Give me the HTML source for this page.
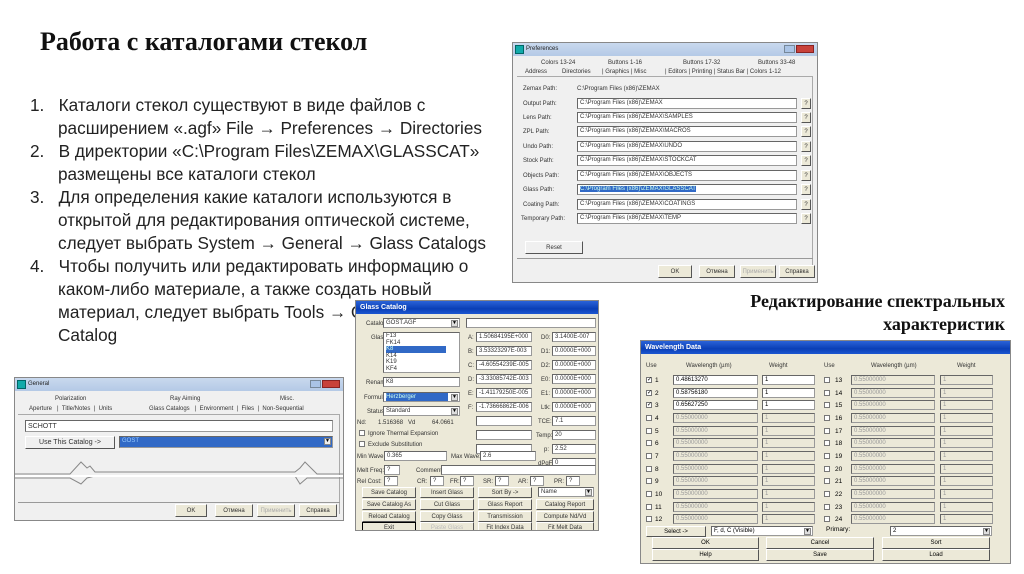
<!DOCTYPE html>
<html><head><meta charset="utf-8"><style>
*{margin:0;padding:0;box-sizing:border-box}
body{width:1024px;height:574px;background:#fff;position:relative;overflow:hidden;font-family:"Liberation Sans",sans-serif}
.a{position:absolute}
.t{position:absolute;left:0;font-family:"Liberation Sans","DejaVu Sans",sans-serif;font-size:17.2px;color:#222;white-space:nowrap;line-height:23px}
.w{position:absolute;background:#ece9d8;border:1px solid #888;font-size:6px;color:#333;overflow:hidden;line-height:1}
.w .a{white-space:nowrap}
.f{position:absolute;background:#fff;border:1px solid #999;border-top-color:#666;border-left-color:#666;font-size:6px;padding-left:2px;line-height:9px;white-space:nowrap;overflow:hidden}
.g{background:#ece9d8;color:#999}
.b{position:absolute;background:#ece9d8;border:1px solid #fff;border-right-color:#555;border-bottom-color:#555;font-size:6px;text-align:center;line-height:10px;white-space:nowrap}
.sel{background:#3169c6;color:#cfe}
.cb{position:absolute;width:6px;height:6px;background:#fff;border:1px solid #777;font-size:6px;line-height:5px;text-align:center}
.dd{position:absolute;right:1px;top:1px;width:7px;height:7px;background:#ddd;border:1px solid #888;font-size:5px;line-height:5px;text-align:center;color:#000}
.xp{position:absolute;left:0;top:0;right:0;height:13px;background:linear-gradient(#2a63d8,#0a3fb6 60%,#1c56d0);color:#fff;font-weight:bold;font-size:7px;line-height:13px;padding-left:4px}
.w7{position:absolute;left:0;top:0;right:0;height:13px;background:linear-gradient(#c9d9ee,#b4c9e6);color:#222;font-size:6px;line-height:13px;padding-left:13px}
</style></head><body>

<div class="a" style="left:40px;top:27px;font-family:'Liberation Serif',serif;font-weight:bold;font-size:26px;color:#111;white-space:nowrap">Работа с каталогами стекол</div>

<div class="a" style="left:30px;top:94px;width:470px;height:260px">
<div class="t" style="top:0">1.&nbsp;&nbsp;&nbsp;Каталоги стекол существуют в виде файлов с</div>
<div class="t" style="top:23px;left:28px">расширением «.agf» File → Preferences → Directories</div>
<div class="t" style="top:46px">2.&nbsp;&nbsp;&nbsp;В директории «C:\Program Files\ZEMAX\GLASSCAT»</div>
<div class="t" style="top:69px;left:28px">размещены все каталоги стекол</div>
<div class="t" style="top:92px">3.&nbsp;&nbsp;&nbsp;Для определения какие каталоги используются в</div>
<div class="t" style="top:115px;left:28px">открытой для редактирования оптической системе,</div>
<div class="t" style="top:138px;left:28px">следует выбрать System → General → Glass Catalogs</div>
<div class="t" style="top:161px">4.&nbsp;&nbsp;&nbsp;Чтобы получить или редактировать информацию о</div>
<div class="t" style="top:184px;left:28px">каком-либо материале, а также создать новый</div>
<div class="t" style="top:207px;left:28px">материал, следует выбрать Tools → Glass</div>
<div class="t" style="top:230px;left:28px">Catalog</div>
</div>

<div class="a" style="right:19px;top:290px;text-align:right;font-family:'Liberation Serif',serif;font-weight:bold;font-size:18px;line-height:23px;color:#111;white-space:nowrap">Редактирование спектральных<br>характеристик</div>

<!-- Preferences -->
<div class="w" style="left:512px;top:42px;width:306px;height:241px;background:#f0f0f0">
<div class="w7">Preferences</div>
<div class="a" style="left:2px;top:2px;width:9px;height:9px;background:#1aa;border:1px solid #066"></div>
<div class="a" style="right:22px;top:2px;width:11px;height:8px;background:#aac4e6;border:1px solid #789"></div>
<div class="a" style="right:3px;top:2px;width:18px;height:8px;background:#c8413a;border:1px solid #822"></div>
<div class="a" style="left:28px;top:17px">Colors 13-24</div><div class="a" style="left:95px;top:17px">Buttons 1-16</div><div class="a" style="left:170px;top:17px">Buttons 17-32</div><div class="a" style="left:245px;top:17px">Buttons 33-48</div>
<div class="a" style="left:12px;top:26px">Address</div><div class="a" style="left:49px;top:26px">Directories</div><div class="a" style="left:89px;top:26px">| Graphics | Misc</div><div class="a" style="left:152px;top:26px">| Editors | Printing | Status Bar | Colors 1-12</div>
<div class="a" style="left:4px;top:33px;width:296px;height:202px;border-top:1px solid #aaa;border-right:1px solid #aaa"></div>
<div class="a" style="left:10px;top:43px">Zemax Path:</div><div class="a" style="left:64px;top:43px">C:\Program Files (x86)\ZEMAX</div>
<div class="a" style="left:10px;top:58px">Output Path:</div><div class="f" style="left:64px;top:55px;width:220px;height:11px">C:\Program Files (x86)\ZEMAX</div><div class="b" style="left:288px;top:55px;width:10px;height:11px">?</div>
<div class="a" style="left:10px;top:72px">Lens Path:</div><div class="f" style="left:64px;top:69px;width:220px;height:11px">C:\Program Files (x86)\ZEMAX\SAMPLES</div><div class="b" style="left:288px;top:69px;width:10px;height:11px">?</div>
<div class="a" style="left:10px;top:86px">ZPL Path:</div><div class="f" style="left:64px;top:83px;width:220px;height:11px">C:\Program Files (x86)\ZEMAX\MACROS</div><div class="b" style="left:288px;top:83px;width:10px;height:11px">?</div>
<div class="a" style="left:10px;top:101px">Undo Path:</div><div class="f" style="left:64px;top:98px;width:220px;height:11px">C:\Program Files (x86)\ZEMAX\UNDO</div><div class="b" style="left:288px;top:98px;width:10px;height:11px">?</div>
<div class="a" style="left:10px;top:115px">Stock Path:</div><div class="f" style="left:64px;top:112px;width:220px;height:11px">C:\Program Files (x86)\ZEMAX\STOCKCAT</div><div class="b" style="left:288px;top:112px;width:10px;height:11px">?</div>
<div class="a" style="left:10px;top:130px">Objects Path:</div><div class="f" style="left:64px;top:127px;width:220px;height:11px">C:\Program Files (x86)\ZEMAX\OBJECTS</div><div class="b" style="left:288px;top:127px;width:10px;height:11px">?</div>
<div class="a" style="left:10px;top:144px">Glass Path:</div><div class="f" style="left:64px;top:141px;width:220px;height:11px"><span class="sel">C:\Program Files (x86)\ZEMAX\GLASSCAT</span></div><div class="b" style="left:288px;top:141px;width:10px;height:11px">?</div>
<div class="a" style="left:10px;top:159px">Coating Path:</div><div class="f" style="left:64px;top:156px;width:220px;height:11px">C:\Program Files (x86)\ZEMAX\COATINGS</div><div class="b" style="left:288px;top:156px;width:10px;height:11px">?</div>
<div class="a" style="left:8px;top:173px">Temporary Path:</div><div class="f" style="left:64px;top:170px;width:220px;height:11px">C:\Program Files (x86)\ZEMAX\TEMP</div><div class="b" style="left:288px;top:170px;width:10px;height:11px">?</div>
<div class="b" style="left:12px;top:198px;width:58px;height:13px;line-height:12px;background:#f0f0f0">Reset</div>
<div class="a" style="left:4px;top:215px;width:296px;border-top:1px solid #999"></div>
<div class="b" style="left:145px;top:222px;width:34px;height:13px;line-height:12px">OK</div>
<div class="b" style="left:186px;top:222px;width:36px;height:13px;line-height:12px">Отмена</div>
<div class="b" style="left:227px;top:222px;width:36px;height:13px;line-height:12px;color:#aaa">Применить</div>
<div class="b" style="left:266px;top:222px;width:36px;height:13px;line-height:12px">Справка</div>
</div>

<!-- Glass Catalog -->
<div class="w" style="left:355px;top:300px;width:244px;height:231px">
<div class="xp">Glass Catalog</div>
<div class="a" style="left:10px;top:20px">Catalog:</div><div class="f" style="left:27px;top:17px;width:77px;height:10px">GOST.AGF<div class="dd">▼</div></div>
<div class="f" style="left:110px;top:17px;width:130px;height:10px"></div>
<div class="a" style="left:15px;top:34px">Glass:</div>
<div class="f" style="left:27px;top:31px;width:77px;height:41px;line-height:6.5px">F13<br>FK14<br><span class="sel" style="display:inline-block;width:60px">K8</span><br>K14<br>K19<br>KF4</div>
<div class="a" style="left:10px;top:79px">Rename:</div><div class="f" style="left:27px;top:76px;width:77px;height:10px">K8</div>
<div class="a" style="left:8px;top:94px">Formula:</div><div class="f" style="left:27px;top:91px;width:77px;height:10px"><span class="sel" style="display:inline-block;width:62px">Herzberger</span><div class="dd">▼</div></div>
<div class="a" style="left:11px;top:108px">Status:</div><div class="f" style="left:27px;top:105px;width:77px;height:10px">Standard<div class="dd">▼</div></div>
<div class="a" style="left:1px;top:119px">Nd:&nbsp;&nbsp;&nbsp;&nbsp;&nbsp;&nbsp;&nbsp;1.516368&nbsp;&nbsp;&nbsp;Vd&nbsp;&nbsp;&nbsp;&nbsp;&nbsp;&nbsp;&nbsp;&nbsp;&nbsp;&nbsp;64.0661</div>
<div class="cb" style="left:3px;top:129px"></div><div class="a" style="left:12px;top:130px">Ignore Thermal Expansion</div>
<div class="cb" style="left:3px;top:140px"></div><div class="a" style="left:12px;top:141px">Exclude Substitution</div>
<div class="a" style="left:112px;top:34px">A:</div><div class="f" style="left:120px;top:31px;width:56px;height:10px">1.50684195E+000</div>
<div class="a" style="left:112px;top:48px">B:</div><div class="f" style="left:120px;top:45px;width:56px;height:10px">3.53323297E-003</div>
<div class="a" style="left:112px;top:62px">C:</div><div class="f" style="left:120px;top:59px;width:56px;height:10px">-4.60554239E-005</div>
<div class="a" style="left:112px;top:76px">D:</div><div class="f" style="left:120px;top:73px;width:56px;height:10px">-3.33085742E-003</div>
<div class="a" style="left:112px;top:90px">E:</div><div class="f" style="left:120px;top:87px;width:56px;height:10px">-1.41179250E-005</div>
<div class="a" style="left:112px;top:104px">F:</div><div class="f" style="left:120px;top:101px;width:56px;height:10px">-1.73666862E-006</div>
<div class="f" style="left:120px;top:115px;width:56px;height:10px"></div>
<div class="f" style="left:120px;top:129px;width:56px;height:10px"></div>
<div class="f" style="left:120px;top:143px;width:56px;height:10px"></div>
<div class="a" style="left:185px;top:34px">D0:</div><div class="f" style="left:196px;top:31px;width:44px;height:10px">3.1400E-007</div>
<div class="a" style="left:185px;top:48px">D1:</div><div class="f" style="left:196px;top:45px;width:44px;height:10px">0.0000E+000</div>
<div class="a" style="left:185px;top:62px">D2:</div><div class="f" style="left:196px;top:59px;width:44px;height:10px">0.0000E+000</div>
<div class="a" style="left:185px;top:76px">E0:</div><div class="f" style="left:196px;top:73px;width:44px;height:10px">0.0000E+000</div>
<div class="a" style="left:185px;top:90px">E1:</div><div class="f" style="left:196px;top:87px;width:44px;height:10px">0.0000E+000</div>
<div class="a" style="left:185px;top:104px">Ltk:</div><div class="f" style="left:196px;top:101px;width:44px;height:10px">0.0000E+000</div>
<div class="a" style="left:182px;top:118px">TCE:</div><div class="f" style="left:196px;top:115px;width:44px;height:10px">7.1</div>
<div class="a" style="left:180px;top:132px">Temp:</div><div class="f" style="left:196px;top:129px;width:44px;height:10px">20</div>
<div class="a" style="left:188px;top:146px">p:</div><div class="f" style="left:196px;top:143px;width:44px;height:10px">2.52</div>
<div class="a" style="left:182px;top:160px">dPgF:</div><div class="f" style="left:196px;top:157px;width:44px;height:10px">0</div>
<div class="a" style="left:1px;top:153px">Min Wave:</div><div class="f" style="left:28px;top:150px;width:63px;height:10px">0.365</div>
<div class="a" style="left:95px;top:153px">Max Wave:</div><div class="f" style="left:124px;top:150px;width:56px;height:10px">2.6</div>
<div class="a" style="left:1px;top:167px">Melt Freq:</div><div class="f" style="left:28px;top:164px;width:16px;height:10px">?</div>
<div class="a" style="left:60px;top:167px">Comment:</div><div class="f" style="left:85px;top:164px;width:155px;height:10px"></div>
<div class="a" style="left:1px;top:178px">Rel Cost:</div><div class="f" style="left:28px;top:175px;width:14px;height:10px">?</div>
<div class="a" style="left:61px;top:178px">CR:</div><div class="f" style="left:74px;top:175px;width:14px;height:10px">?</div>
<div class="a" style="left:94px;top:178px">FR:</div><div class="f" style="left:104px;top:175px;width:14px;height:10px">?</div>
<div class="a" style="left:127px;top:178px">SR:</div><div class="f" style="left:139px;top:175px;width:14px;height:10px">?</div>
<div class="a" style="left:162px;top:178px">AR:</div><div class="f" style="left:174px;top:175px;width:14px;height:10px">?</div>
<div class="a" style="left:198px;top:178px">PR:</div><div class="f" style="left:210px;top:175px;width:14px;height:10px">?</div>
<div class="b" style="left:6px;top:186px;width:54px;height:11px">Save Catalog</div>
<div class="b" style="left:64px;top:186px;width:54px;height:11px">Insert Glass</div>
<div class="b" style="left:122px;top:186px;width:54px;height:11px">Sort By -&gt;</div>
<div class="f" style="left:182px;top:186px;width:56px;height:10px">Name<div class="dd">▼</div></div>
<div class="b" style="left:6px;top:198px;width:54px;height:11px">Save Catalog As</div>
<div class="b" style="left:64px;top:198px;width:54px;height:11px">Cut Glass</div>
<div class="b" style="left:122px;top:198px;width:54px;height:11px">Glass Report</div>
<div class="b" style="left:180px;top:198px;width:58px;height:11px">Catalog Report</div>
<div class="b" style="left:6px;top:210px;width:54px;height:11px">Reload Catalog</div>
<div class="b" style="left:64px;top:210px;width:54px;height:11px">Copy Glass</div>
<div class="b" style="left:122px;top:210px;width:54px;height:11px">Transmission</div>
<div class="b" style="left:180px;top:210px;width:58px;height:11px">Compute Nd/Vd</div>
<div class="b" style="left:6px;top:221px;width:54px;height:11px;border:1px solid #000">Exit</div>
<div class="b" style="left:64px;top:221px;width:54px;height:11px;color:#bbb">Paste Glass</div>
<div class="b" style="left:122px;top:221px;width:54px;height:11px">Fit Index Data</div>
<div class="b" style="left:180px;top:221px;width:58px;height:11px">Fit Melt Data</div>
</div>

<!-- Wavelength Data -->
<div class="w" style="left:640px;top:340px;width:371px;height:224px">
<div class="xp">Wavelength Data</div>
<div class="a" style="left:5px;top:22px">Use</div><div class="a" style="left:45px;top:22px">Wavelength (µm)</div><div class="a" style="left:128px;top:22px">Weight</div>
<div class="a" style="left:183px;top:22px">Use</div><div class="a" style="left:230px;top:22px">Wavelength (µm)</div><div class="a" style="left:316px;top:22px">Weight</div>
</div>
<div class="a" style="left:640px;top:340px;width:371px;height:224px;font-size:6.5px">
<div class="cb" style="left:6px;top:37px">✓</div><div class="a" style="left:15px;top:37px">1</div><div class="f" style="left:33px;top:35px;width:85px;height:10px">0.48613270</div><div class="f" style="left:122px;top:35px;width:53px;height:10px">1</div>
<div class="cb" style="left:6px;top:50px">✓</div><div class="a" style="left:15px;top:50px">2</div><div class="f" style="left:33px;top:48px;width:85px;height:10px">0.58756180</div><div class="f" style="left:122px;top:48px;width:53px;height:10px">1</div>
<div class="cb" style="left:6px;top:62px">✓</div><div class="a" style="left:15px;top:62px">3</div><div class="f" style="left:33px;top:60px;width:85px;height:10px">0.65627250</div><div class="f" style="left:122px;top:60px;width:53px;height:10px">1</div>
<div class="cb" style="left:6px;top:75px"></div><div class="a" style="left:15px;top:75px">4</div><div class="f g" style="left:33px;top:73px;width:85px;height:10px">0.55000000</div><div class="f g" style="left:122px;top:73px;width:53px;height:10px">1</div>
<div class="cb" style="left:6px;top:88px"></div><div class="a" style="left:15px;top:88px">5</div><div class="f g" style="left:33px;top:86px;width:85px;height:10px">0.55000000</div><div class="f g" style="left:122px;top:86px;width:53px;height:10px">1</div>
<div class="cb" style="left:6px;top:100px"></div><div class="a" style="left:15px;top:100px">6</div><div class="f g" style="left:33px;top:98px;width:85px;height:10px">0.55000000</div><div class="f g" style="left:122px;top:98px;width:53px;height:10px">1</div>
<div class="cb" style="left:6px;top:113px"></div><div class="a" style="left:15px;top:113px">7</div><div class="f g" style="left:33px;top:111px;width:85px;height:10px">0.55000000</div><div class="f g" style="left:122px;top:111px;width:53px;height:10px">1</div>
<div class="cb" style="left:6px;top:126px"></div><div class="a" style="left:15px;top:126px">8</div><div class="f g" style="left:33px;top:124px;width:85px;height:10px">0.55000000</div><div class="f g" style="left:122px;top:124px;width:53px;height:10px">1</div>
<div class="cb" style="left:6px;top:138px"></div><div class="a" style="left:15px;top:138px">9</div><div class="f g" style="left:33px;top:136px;width:85px;height:10px">0.55000000</div><div class="f g" style="left:122px;top:136px;width:53px;height:10px">1</div>
<div class="cb" style="left:6px;top:151px"></div><div class="a" style="left:15px;top:151px">10</div><div class="f g" style="left:33px;top:149px;width:85px;height:10px">0.55000000</div><div class="f g" style="left:122px;top:149px;width:53px;height:10px">1</div>
<div class="cb" style="left:6px;top:164px"></div><div class="a" style="left:15px;top:164px">11</div><div class="f g" style="left:33px;top:162px;width:85px;height:10px">0.55000000</div><div class="f g" style="left:122px;top:162px;width:53px;height:10px">1</div>
<div class="cb" style="left:6px;top:176px"></div><div class="a" style="left:15px;top:176px">12</div><div class="f g" style="left:33px;top:174px;width:85px;height:10px">0.55000000</div><div class="f g" style="left:122px;top:174px;width:53px;height:10px">1</div>
<div class="cb" style="left:184px;top:37px"></div><div class="a" style="left:195px;top:37px">13</div><div class="f g" style="left:211px;top:35px;width:84px;height:10px">0.55000000</div><div class="f g" style="left:300px;top:35px;width:53px;height:10px">1</div>
<div class="cb" style="left:184px;top:50px"></div><div class="a" style="left:195px;top:50px">14</div><div class="f g" style="left:211px;top:48px;width:84px;height:10px">0.55000000</div><div class="f g" style="left:300px;top:48px;width:53px;height:10px">1</div>
<div class="cb" style="left:184px;top:62px"></div><div class="a" style="left:195px;top:62px">15</div><div class="f g" style="left:211px;top:60px;width:84px;height:10px">0.55000000</div><div class="f g" style="left:300px;top:60px;width:53px;height:10px">1</div>
<div class="cb" style="left:184px;top:75px"></div><div class="a" style="left:195px;top:75px">16</div><div class="f g" style="left:211px;top:73px;width:84px;height:10px">0.55000000</div><div class="f g" style="left:300px;top:73px;width:53px;height:10px">1</div>
<div class="cb" style="left:184px;top:88px"></div><div class="a" style="left:195px;top:88px">17</div><div class="f g" style="left:211px;top:86px;width:84px;height:10px">0.55000000</div><div class="f g" style="left:300px;top:86px;width:53px;height:10px">1</div>
<div class="cb" style="left:184px;top:100px"></div><div class="a" style="left:195px;top:100px">18</div><div class="f g" style="left:211px;top:98px;width:84px;height:10px">0.55000000</div><div class="f g" style="left:300px;top:98px;width:53px;height:10px">1</div>
<div class="cb" style="left:184px;top:113px"></div><div class="a" style="left:195px;top:113px">19</div><div class="f g" style="left:211px;top:111px;width:84px;height:10px">0.55000000</div><div class="f g" style="left:300px;top:111px;width:53px;height:10px">1</div>
<div class="cb" style="left:184px;top:126px"></div><div class="a" style="left:195px;top:126px">20</div><div class="f g" style="left:211px;top:124px;width:84px;height:10px">0.55000000</div><div class="f g" style="left:300px;top:124px;width:53px;height:10px">1</div>
<div class="cb" style="left:184px;top:138px"></div><div class="a" style="left:195px;top:138px">21</div><div class="f g" style="left:211px;top:136px;width:84px;height:10px">0.55000000</div><div class="f g" style="left:300px;top:136px;width:53px;height:10px">1</div>
<div class="cb" style="left:184px;top:151px"></div><div class="a" style="left:195px;top:151px">22</div><div class="f g" style="left:211px;top:149px;width:84px;height:10px">0.55000000</div><div class="f g" style="left:300px;top:149px;width:53px;height:10px">1</div>
<div class="cb" style="left:184px;top:164px"></div><div class="a" style="left:195px;top:164px">23</div><div class="f g" style="left:211px;top:162px;width:84px;height:10px">0.55000000</div><div class="f g" style="left:300px;top:162px;width:53px;height:10px">1</div>
<div class="cb" style="left:184px;top:176px"></div><div class="a" style="left:195px;top:176px">24</div><div class="f g" style="left:211px;top:174px;width:84px;height:10px">0.55000000</div><div class="f g" style="left:300px;top:174px;width:53px;height:10px">1</div>
<div class="b" style="left:6px;top:186px;width:60px;height:11px">Select -&gt;</div>
<div class="f" style="left:71px;top:186px;width:102px;height:10px">F, d, C (Visible)<div class="dd">▼</div></div>
<div class="a" style="left:186px;top:186px">Primary:</div>
<div class="f" style="left:250px;top:186px;width:102px;height:10px">2<div class="dd">▼</div></div>
<div class="b" style="left:12px;top:197px;width:107px;height:12px">OK</div>
<div class="b" style="left:126px;top:197px;width:108px;height:12px">Cancel</div>
<div class="b" style="left:242px;top:197px;width:108px;height:12px">Sort</div>
<div class="b" style="left:12px;top:209px;width:107px;height:12px">Help</div>
<div class="b" style="left:126px;top:209px;width:108px;height:12px">Save</div>
<div class="b" style="left:242px;top:209px;width:108px;height:12px">Load</div>
</div>

<!-- General -->
<div class="w" style="left:14px;top:377px;width:330px;height:144px;background:#f0f0f0">
<div class="w7">General</div>
<div class="a" style="left:2px;top:2px;width:9px;height:9px;background:#1aa;border:1px solid #066"></div>
<div class="a" style="right:22px;top:2px;width:11px;height:8px;background:#aac4e6;border:1px solid #789"></div>
<div class="a" style="right:3px;top:2px;width:18px;height:8px;background:#c8413a;border:1px solid #822"></div>
<div class="a" style="left:40px;top:18px">Polarization</div><div class="a" style="left:155px;top:18px">Ray Aiming</div><div class="a" style="left:265px;top:18px">Misc.</div>
<div class="a" style="left:14px;top:28px">Aperture&nbsp;&nbsp;&nbsp;|&nbsp;&nbsp;Title/Notes&nbsp;&nbsp;|&nbsp;&nbsp;Units</div><div class="a" style="left:134px;top:28px">Glass Catalogs&nbsp;&nbsp;&nbsp;|&nbsp;&nbsp;Environment&nbsp;&nbsp;|&nbsp;&nbsp;Files&nbsp;&nbsp;|&nbsp;&nbsp;Non-Sequential</div>
<div class="a" style="left:3px;top:36px;width:322px;height:100px;border-top:1px solid #aaa;border-right:1px solid #aaa"></div>
<div class="f" style="left:10px;top:42px;width:308px;height:12px;font-size:7px;line-height:11px">SCHOTT</div>
<div class="b" style="left:10px;top:58px;width:90px;height:13px;line-height:12px;font-size:7px;background:#f0f0f0">Use This Catalog -&gt;</div>
<div class="f" style="left:104px;top:58px;width:214px;height:12px;background:#3169c6;color:#9cf">GOST<div class="dd" style="background:#eee">▼</div></div>
<svg class="a" style="left:0;top:80px" width="330" height="30"><path d="M0 16 H55 L66 4 L72 10 L75 8 L80 14 H280 L285 10 L290 4 L302 16 H330" stroke="#888" fill="none"/><path d="M0 20 H55 L66 26 L72 20 L80 18 H280 L285 26 L292 20 L302 20 H330" stroke="#888" fill="none"/><rect x="0" y="17" width="330" height="2" fill="#fff"/></svg>
<div class="a" style="left:3px;top:124px;width:322px;border-top:1px solid #999"></div>
<div class="b" style="left:160px;top:126px;width:32px;height:13px;line-height:12px">OK</div>
<div class="b" style="left:200px;top:126px;width:38px;height:13px;line-height:12px">Отмена</div>
<div class="b" style="left:242px;top:126px;width:38px;height:13px;line-height:12px;color:#aaa">Применить</div>
<div class="b" style="left:284px;top:126px;width:38px;height:13px;line-height:12px">Справка</div>
</div>
</body></html>
